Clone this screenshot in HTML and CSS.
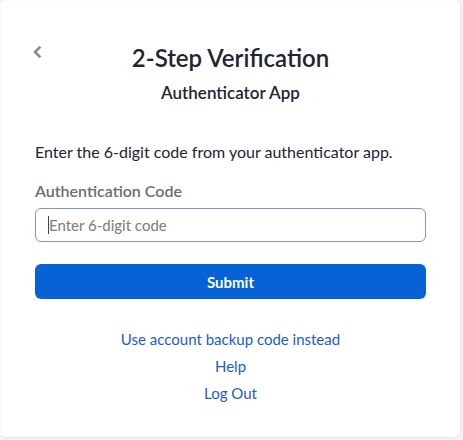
FILE: index.html
```html
<!DOCTYPE html>
<html lang="en">
<head>
    <meta charset="UTF-8">
    <meta name="viewport" content="width=device-width, initial-scale=1.0">
    <title>2-Step Verification</title>
    <link rel="stylesheet" href="styles.css">
</head>
<body>
    <div class="card">
        <div class="card-header">
            <a class="back-button" href="#">
                <svg width="10" height="14" viewBox="0 0 10 14" xmlns="http://www.w3.org/2000/svg">
                    <path d="M7.5 2.5L3 7l4.5 4.5" stroke="#8a8a8a" stroke-width="2.6" fill="none" stroke-linecap="square"/>
                </svg>
            </a>
            <h1>2-Step Verification</h1>
        </div>
        <h2 class="subtitle">Authenticator App</h2>
        <p class="intro">Enter the 6-digit code from your authenticator app.</p>
        <label class="field-label" for="code-input">Authentication Code</label>
        <div class="code-input"><span class="caret"></span><span class="placeholder">Enter 6-digit code</span></div>
        <button class="submit-button">Submit</button>
        <div class="links">
            <a href="#">Use account backup code instead</a>
            <a href="#">Help</a>
            <a href="#">Log Out</a>
        </div>
    </div>
</body>
</html>
```

FILE: styles.css
```css
body {
    font-family: 'Lato', 'Open Sans', sans-serif;
    margin: 0;
    padding: 0;
    background-color: #f3f3f3;
}
.card {
    width: 461px;
    height: 438px;
    box-sizing: border-box;
    background-color: white;
    border: 1px solid #e6e6e6;
    border-top-color: #fafafa;
    border-left-color: #fafafa;
    border-radius: 6px;
    padding: 0 34px;
    display: flex;
    flex-direction: column;
}
.card-header {
    position: relative;
    display: flex;
    justify-content: center;
    padding-top: 42px;
}
.back-button {
    position: absolute;
    left: -5px;
    top: 42px;
    display: flex;
    padding: 2px;
}
h1 {
    margin: 0;
    font-size: 24px;
    font-weight: 600;
    color: #232333;
    line-height: 30px;
}
.subtitle {
    margin: 9px 0 0;
    text-align: center;
    font-size: 17px;
    font-weight: 600;
    color: #232333;
    line-height: 22px;
}
.intro {
    margin: 38px 0 0;
    font-size: 16px;
    color: #232333;
    line-height: 20px;
}
.field-label {
    margin-top: 19px;
    font-size: 16px;
    font-weight: 600;
    color: #6e6e6e;
    line-height: 20px;
}
.code-input {
    margin-top: 7px;
    height: 34px;
    box-sizing: border-box;
    border: 1px solid #7a93e3;
    border-radius: 6px;
    display: flex;
    align-items: center;
    padding-left: 12px;
}
.caret {
    width: 1px;
    height: 18px;
    background-color: #444;
}
.placeholder {
    font-size: 15px;
    color: #7c7c7c;
}
.submit-button {
    margin-top: 22px;
    height: 35px;
    border: none;
    border-radius: 6px;
    background-color: #0762d6;
    color: white;
    font-family: inherit;
    font-size: 15px;
    font-weight: 700;
    cursor: pointer;
}
.links {
    margin-top: 30px;
    display: flex;
    flex-direction: column;
    align-items: center;
    gap: 7px;
}
.links a {
    font-size: 15px;
    line-height: 20px;
    color: #1c5cd0;
    text-decoration: none;
}
```
